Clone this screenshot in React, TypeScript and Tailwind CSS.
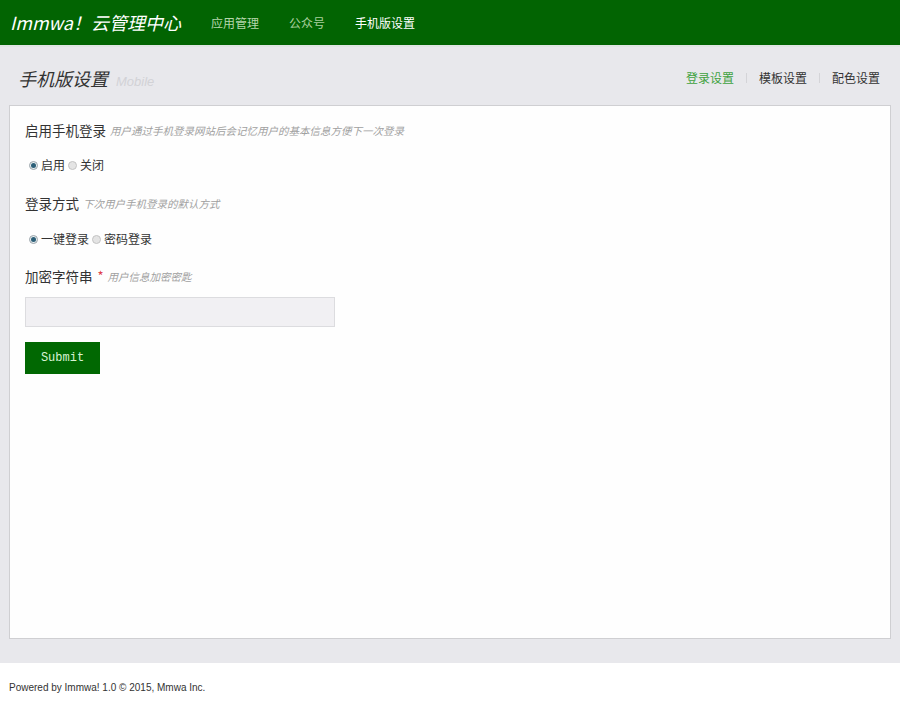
const font = "font-['Microsoft_YaHei','Noto_Sans_CJK_SC',sans-serif]";

const Radio = ({ checked, label }: { checked?: boolean; label: string }) => (
  <label className="flex items-center gap-[3px] mr-[3px]">
    {checked ? (
      <span className="w-[9px] h-[9px] rounded-full border border-[#9aa4aa] bg-[#e8eef0] flex items-center justify-center">
        <span className="w-[5px] h-[5px] rounded-full bg-[#2c5f78]" />
      </span>
    ) : (
      <span className="w-[9px] h-[9px] rounded-full border border-[#c4c4c4] bg-[#e4e4e4]" />
    )}
    <span>{label}</span>
  </label>
);

const Field = ({ title, hint, required }: { title: string; hint: string; required?: boolean }) => (
  <div className="h-[20px] flex items-center gap-[4px]">
    <span className="text-[13.5px] text-[#333]">{title}</span>
    {required && <span className="text-[#e0404a] text-[13px] ml-[1px]">*</span>}
    <span className="text-[10.5px] italic text-[#a0a0a0] pt-[1px]">{hint}</span>
  </div>
);

export default function App() {
  return (
    <div className={`${font} w-[900px] h-[704px] bg-white flex flex-col`}>
      <div className="h-[45px] bg-[#026402] flex items-center px-[10px]">
        <div className="text-white italic text-[18px] w-[201px]">Immwa！云管理中心</div>
        <nav className="flex items-center text-[12px]">
          <span className="text-[#b5d6ac] w-[78px]">应用管理</span>
          <span className="text-[#a9cf9e] w-[66px]">公众号</span>
          <span className="text-white">手机版设置</span>
        </nav>
      </div>

      <div className="bg-[#e8e8ec] border-t-2 border-[#dfe5e3] flex flex-col pb-[24px]">
        <div className="h-[58px] flex items-center justify-between pl-[18px] pr-[20px] pt-[4px]">
          <div className="flex items-baseline gap-[8px]">
            <span className="italic text-[18px] text-[#333]">手机版设置</span>
            <span className="italic text-[13px] text-[#d2d2d6] font-['Liberation_Sans',sans-serif]">Mobile</span>
          </div>
          <div className="flex items-center text-[12px] text-[#333]">
            <span className="text-[#3fa23f]">登录设置</span>
            <span className="mx-[12px] w-px h-[10px] bg-[#d4d4d8]" />
            <span>模板设置</span>
            <span className="mx-[12px] w-px h-[10px] bg-[#d4d4d8]" />
            <span>配色设置</span>
          </div>
        </div>

        <div className="mx-[9px] h-[534px] bg-[#fefefe] border border-[#cfcfd2] pl-[15px] pt-[14px]">
          <Field title="启用手机登录" hint="用户通过手机登录网站后会记忆用户的基本信息方便下一次登录" />
          <div className="mt-[15px] h-[20px] flex items-center pl-[4px] text-[12px] text-[#333]">
            <Radio checked label="启用" />
            <Radio label="关闭" />
          </div>
          <div className="mt-[18px]">
            <Field title="登录方式" hint="下次用户手机登录的默认方式" />
          </div>
          <div className="mt-[16px] h-[20px] flex items-center pl-[4px] text-[12px] text-[#333]">
            <Radio checked label="一键登录" />
            <Radio label="密码登录" />
          </div>
          <div className="mt-[17px]">
            <Field title="加密字符串" hint="用户信息加密密匙" required />
          </div>
          <input
            type="text"
            className="mt-[11px] block w-[310px] h-[30px] bg-[#f1f0f3] border border-[#dcdcdf] outline-none"
          />
          <button className="mt-[15px] w-[75px] h-[32px] bg-[#016802] text-[#d8f3d4] text-[12px] font-['Liberation_Mono',monospace]">
            Submit
          </button>
        </div>
      </div>

      <div className="flex-1 flex items-center pl-[9px] pt-[8px] text-[10px] text-[#333] font-['Liberation_Sans',sans-serif]">
        Powered by Immwa! 1.0 © 2015, Mmwa Inc.
      </div>
    </div>
  );
}
